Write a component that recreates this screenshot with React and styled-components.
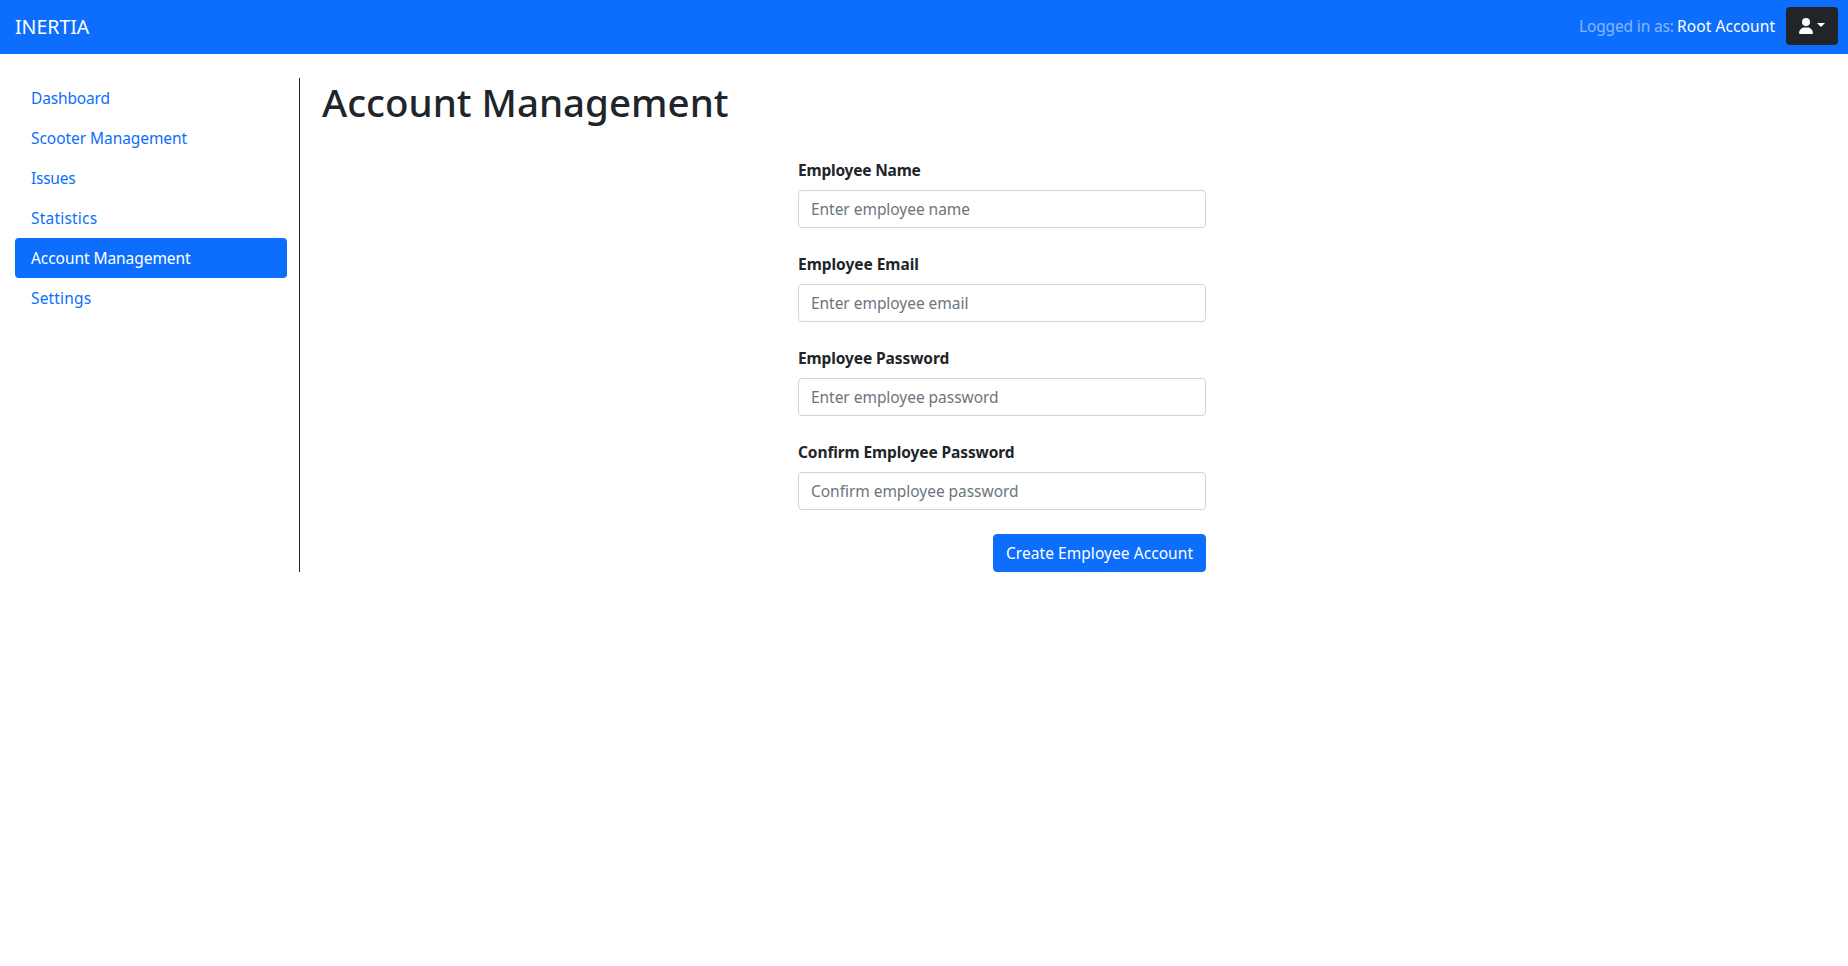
import React from 'react';
import styled, { createGlobalStyle } from 'styled-components';

const GlobalStyle = createGlobalStyle`
  *, *::before, *::after { box-sizing: border-box; }
  body {
    margin: 0;
    background: #fff;
    color: #212529;
    font-family: "Noto Sans", "Open Sans", sans-serif;
    font-size: 15.5px;
    line-height: 24px;
  }
`;

const Navbar = styled.header`
  display: flex;
  align-items: center;
  justify-content: space-between;
  height: 54px;
  padding: 0 10px 2px 15px;
  background: #0d6efd;
`;

const Brand = styled.a`
  padding-top: 2px;
  color: #fff;
  font-size: 19.5px;
  line-height: 30px;
  text-decoration: none;
`;

const UserArea = styled.div`
  display: flex;
  align-items: center;
`;

const LoginStatus = styled.span`
  width: 94px;
  margin-right: 4px;
  color: rgba(255, 255, 255, 0.5);
  letter-spacing: -0.15px;
  white-space: nowrap;
`;

const UserName = styled.span`
  width: 98px;
  margin-right: 11px;
  color: #fff;
  letter-spacing: 0.1px;
  white-space: nowrap;
`;

const UserMenuButton = styled.button`
  display: flex;
  align-items: center;
  gap: 4px;
  width: 52px;
  height: 38px;
  padding: 0 12px 0 13px;
  border: 0;
  border-radius: 4px;
  background: #212529;
  color: #fff;
`;

const Caret = styled.span`
  margin-top: -2px;
  border-top: 4.8px solid currentColor;
  border-right: 4.8px solid transparent;
  border-left: 4.8px solid transparent;
`;

const Page = styled.div`
  display: flex;
  padding: 24px 15px 0;
`;

const Sidebar = styled.nav`
  display: flex;
  flex-direction: column;
  width: 285px;
  padding-right: 12px;
  border-right: 1px solid #212529;
`;

const NavItem = styled.a`
  padding: 8px 16px;
  border-radius: 4px;
  background: ${({ $active }) => ($active ? '#0d6efd' : 'transparent')};
  color: ${({ $active }) => ($active ? '#fff' : '#0d6efd')};
  letter-spacing: ${({ $tracking }) => $tracking || 0}px;
  text-decoration: none;
`;

const Main = styled.main`
  flex: 1;
  padding-left: 22px;
`;

const Title = styled.h1`
  margin: 0 0 32px;
  font-size: 38.5px;
  font-weight: 500;
  line-height: 48px;
`;

const Form = styled.form`
  display: flex;
  flex-direction: column;
  gap: 24px;
  width: 408px;
  margin-left: 476px;
`;

const Field = styled.div`
  display: flex;
  flex-direction: column;
  gap: 8px;
`;

const Label = styled.label`
  font-weight: 700;
  letter-spacing: ${({ $tracking }) => $tracking || 0}px;
`;

const Input = styled.input`
  width: 100%;
  height: 38px;
  padding: 6px 12px;
  border: 1px solid #ced4da;
  border-radius: 4px;
  background: #fff;
  color: #212529;
  font: inherit;
  letter-spacing: -0.04px;
  outline: 0;

  &::placeholder {
    color: #6c757d;
    opacity: 1;
  }
`;

const SubmitButton = styled.button`
  align-self: flex-end;
  width: 213px;
  height: 38px;
  padding: 0;
  border: 1px solid #0d6efd;
  border-radius: 4px;
  background: #0d6efd;
  color: #fff;
  font: inherit;
  letter-spacing: 0.06px;
`;

const navItems = [
  { label: 'Dashboard', tracking: -0.15 },
  { label: 'Scooter Management', tracking: -0.06 },
  { label: 'Issues', tracking: -0.25 },
  { label: 'Statistics', tracking: 0.2 },
  { label: 'Account Management', active: true, tracking: -0.06 },
  { label: 'Settings', tracking: 0.16 },
];

const fields = [
  { id: 'name', label: 'Employee Name', placeholder: 'Enter employee name', type: 'text', tracking: -0.2 },
  { id: 'email', label: 'Employee Email', placeholder: 'Enter employee email', type: 'email', tracking: -0.03 },
  { id: 'password', label: 'Employee Password', placeholder: 'Enter employee password', type: 'password', tracking: -0.1 },
  { id: 'confirm', label: 'Confirm Employee Password', placeholder: 'Confirm employee password', type: 'password', tracking: -0.11 },
];

function PersonIcon() {
  return (
    <svg width="14" height="16" viewBox="0 0 448 512" fill="currentColor" aria-hidden="true">
      <path d="M224 256A128 128 0 1 0 224 0a128 128 0 1 0 0 256zm-45.7 48C79.8 304 0 383.800 0 482.300C0 498.700 13.300 512 29.700 512H418.300c16.400 0 29.700-13.300 29.700-29.700C448 383.800 368.200 304 269.700 304H178.300z" />
    </svg>
  );
}

export default function App() {
  return (
    <>
      <GlobalStyle />
      <Navbar>
        <Brand href="#">INERTIA</Brand>
        <UserArea>
          <LoginStatus>Logged in as:</LoginStatus>
          <UserName>Root Account</UserName>
          <UserMenuButton type="button" aria-label="Account menu">
            <PersonIcon />
            <Caret />
          </UserMenuButton>
        </UserArea>
      </Navbar>
      <Page>
        <Sidebar>
          {navItems.map(({ label, active, tracking }) => (
            <NavItem key={label} href="#" $active={active} $tracking={tracking}>
              {label}
            </NavItem>
          ))}
        </Sidebar>
        <Main>
          <Title>Account Management</Title>
          <Form>
            {fields.map(({ id, label, placeholder, type, tracking }) => (
              <Field key={id}>
                <Label htmlFor={id} $tracking={tracking}>{label}</Label>
                <Input id={id} type={type} placeholder={placeholder} />
              </Field>
            ))}
            <SubmitButton type="button">Create Employee Account</SubmitButton>
          </Form>
        </Main>
      </Page>
    </>
  );
}
